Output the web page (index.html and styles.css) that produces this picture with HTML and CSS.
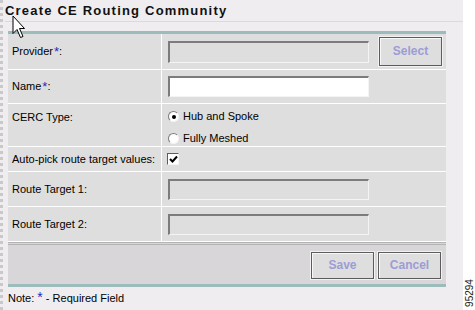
FILE: index.html
```html
<!doctype html>
<html lang=en>
<head>
    <title>Create CE Routing Community</title>
    <link rel="stylesheet" href="styles.css">
</head>
<body>
    <div class="frame">
        <h1 class="title">Create CE Routing Community</h1>

        <div class="panel">
            <div class="row row-provider">
                <div class="label">Provider<sup class="req">*</sup>:</div>
                <div class="value">
                    <span class="field disabled"></span>
                    <span class="button button-select">Select</span>
                </div>
            </div>
            <div class="row row-name">
                <div class="label">Name<sup class="req">*</sup>:</div>
                <div class="value">
                    <span class="field"></span>
                </div>
            </div>
            <div class="row row-type">
                <div class="label label-top">CERC Type:</div>
                <div class="value value-stack">
                    <label class="choice"><span class="radio checked"></span>Hub and Spoke</label>
                    <label class="choice"><span class="radio"></span>Fully Meshed</label>
                </div>
            </div>
            <div class="row row-auto">
                <div class="label">Auto-pick route target values:</div>
                <div class="value">
                    <span class="check">
                        <svg width="9" height="9" viewBox="0 0 9 9"><path d="M1 4 L3.5 6.5 L8 1.5" fill="none" stroke="#000" stroke-width="2"/></svg>
                    </span>
                </div>
            </div>
            <div class="row row-rt">
                <div class="label">Route Target 1:</div>
                <div class="value">
                    <span class="field disabled"></span>
                </div>
            </div>
            <div class="row row-rt">
                <div class="label">Route Target 2:</div>
                <div class="value">
                    <span class="field disabled"></span>
                </div>
            </div>
            <div class="actions">
                <span class="button">Save</span>
                <span class="button">Cancel</span>
            </div>
        </div>

        <p class="note">Note: <span class="req">*</span> - Required Field</p>
    </div>

    <span class="figure-id">95294</span>

    <svg class="cursor" width="14" height="24" viewBox="0 0 14 24">
        <path d="M1 1 L1 18.5 L5 14.5 L8.5 22.5 L11 21.5 L7.5 13.5 L12.5 13.5 Z" fill="#fff" stroke="#000" stroke-width="1"/>
    </svg>
</body>
</html>
```

FILE: styles.css
```css
* {
    padding: 0;
    margin: 0;
    box-sizing: border-box;
}
body {
    width: 475px;
    height: 310px;
    background: #ffffff;
    font: 11px/13px "Liberation Sans", Arial, sans-serif;
    color: #000000;
    position: relative;
    overflow: hidden;
}
.frame {
    width: 463px;
    height: 310px;
    background: #efedef;
    border-left: 3px dotted #c9c9c9;
    padding-left: 5px;
}
.title {
    margin-left: -3px;
    height: 22px;
    padding-top: 4px;
    font: bold 13px/14px "Liberation Sans", Arial, sans-serif;
    letter-spacing: 1.2px;
    color: #111111;
    border-bottom: 1px solid #d6dcd8;
}
.panel {
    width: 438px;
    margin-top: 9px;
    border-top: 3px solid #9cbcbc;
    border-bottom: 3px solid #9cbcbc;
    background: #dedede;
}
.row {
    display: flex;
    border-bottom: 1px solid #ffffff;
}
.row-provider { height: 36px; }
.row-name { height: 34px; }
.row-type { height: 43px; }
.row-auto { height: 25px; }
.row-rt { height: 35px; }
.label {
    width: 154px;
    border-right: 1px solid #ffffff;
    padding-left: 4px;
    display: flex;
    align-items: center;
}
.label-top {
    align-items: flex-start;
    padding-top: 7px;
}
.req {
    color: #1c2cc0;
    font-size: 14px;
    line-height: 0;
}
sup.req {
    vertical-align: 4px;
    margin-left: 1px;
    font-size: 13px;
}
.value {
    flex: 1;
    display: flex;
    align-items: center;
    padding-left: 6px;
}
.value-stack {
    flex-direction: column;
    align-items: flex-start;
    justify-content: flex-start;
    padding-top: 6px;
    gap: 9px;
}
.field {
    display: block;
    width: 201px;
    height: 21px;
    background: #ffffff;
    border-top: 2px solid #7c7c7c;
    border-left: 2px solid #7c7c7c;
    border-bottom: 1px solid #f4f4f4;
    border-right: 1px solid #f4f4f4;
}
.field.disabled {
    background: #dedede;
}
.row-provider .field {
    height: 22px;
}
.button {
    display: flex;
    align-items: center;
    justify-content: center;
    width: 63px;
    height: 27px;
    background: #dedede;
    border: 1px solid #5c5c5c;
    box-shadow: inset 1px 1px 0 #f8f8f8;
    outline: 1px solid #f2f2f2;
    outline-offset: 0;
    color: #9c9cd6;
    font-weight: bold;
    font-size: 12px;
}
.button-select {
    height: 29px;
    margin-left: 10px;
}
.choice {
    display: flex;
    align-items: center;
    gap: 4px;
    height: 13px;
    font-size: 11px;
}
.radio {
    display: block;
    width: 11px;
    height: 11px;
    border-radius: 50%;
    background: #ffffff;
    border: 1px solid;
    border-color: #7c7c7c #f4f4f4 #f4f4f4 #7c7c7c;
    position: relative;
}
.radio.checked::after {
    content: "";
    position: absolute;
    left: 3px;
    top: 3px;
    width: 4px;
    height: 4px;
    border-radius: 50%;
    background: #000000;
}
.check {
    display: flex;
    align-items: center;
    justify-content: center;
    width: 12px;
    height: 12px;
    margin-left: -1px;
    background: #ffffff;
    border: 1px solid;
    border-color: #5c5c5c #f4f4f4 #f4f4f4 #5c5c5c;
}
.actions {
    height: 42px;
    background: #d8d6d8;
    border-top: 3px double #b4b4b4;
    display: flex;
    justify-content: flex-end;
    align-items: center;
    gap: 4px;
    padding: 2px 5px 0 0;
}
.note {
    margin-top: 5px;
    font-size: 11px;
}
.figure-id {
    position: absolute;
    left: 455px;
    top: 288px;
    width: 30px;
    text-align: center;
    transform: rotate(-90deg);
    font: 10px/10px "Liberation Sans", Arial, sans-serif;
    color: #222222;
}
.cursor {
    position: absolute;
    left: 12px;
    top: 15px;
}
```
